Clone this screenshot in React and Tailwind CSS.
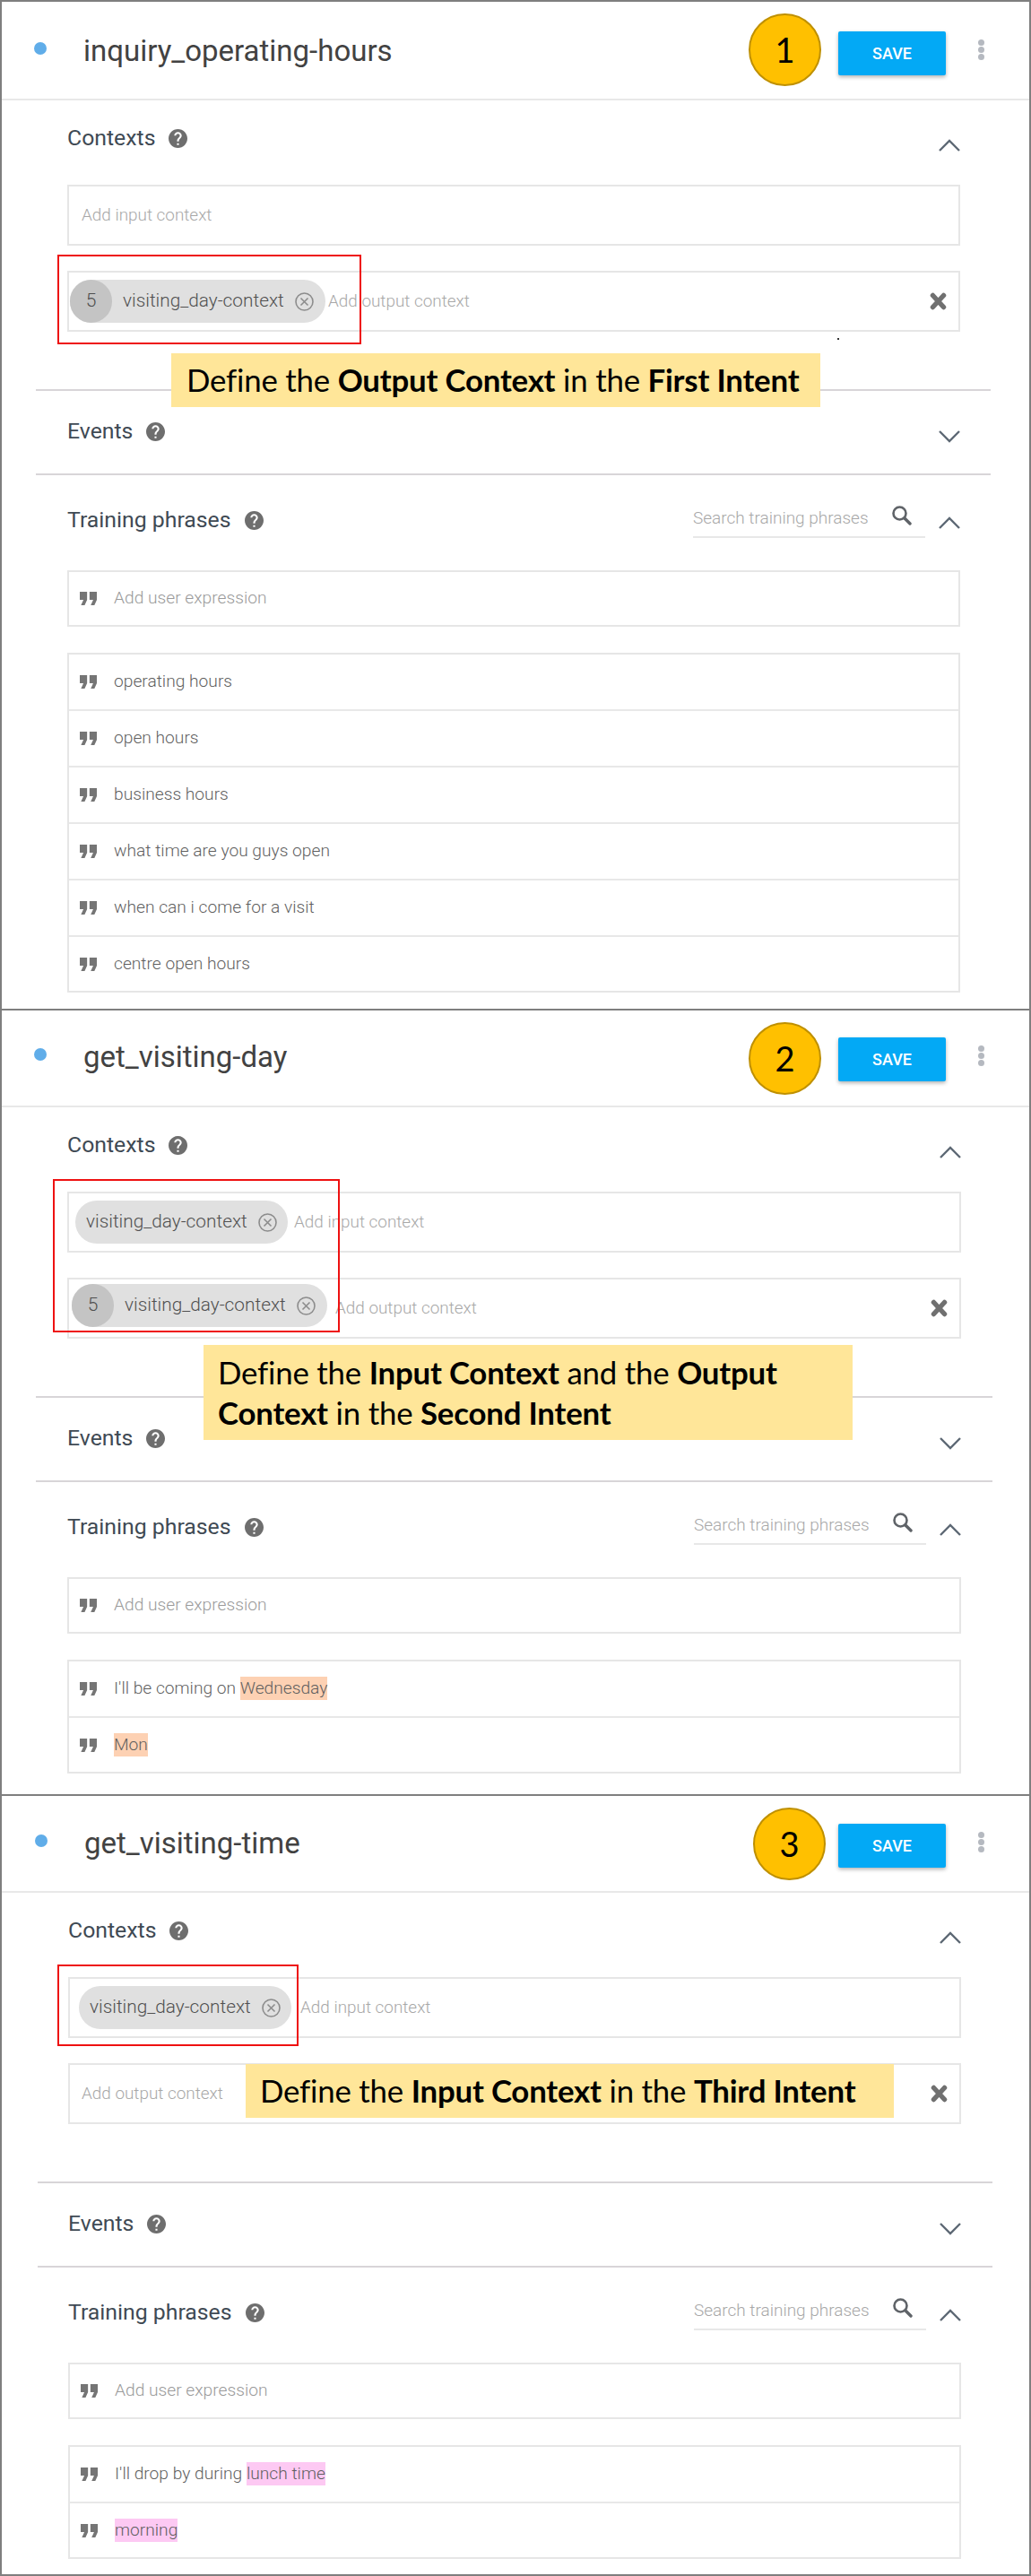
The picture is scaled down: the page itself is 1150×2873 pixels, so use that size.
import React from "react";

const roboto = "font-['Roboto',sans-serif]";
const lato = "font-['Lato',sans-serif]";

function Help() {
  return (
    <svg width="21" height="21" viewBox="2 2 20 20" fill="#6e6e6e" className="shrink-0">
      <path d="M12 2C6.48 2 2 6.48 2 12s4.48 10 10 10 10-4.48 10-10S17.52 2 12 2zm1 17h-2v-2h2v2zm2.07-7.75l-.9.92C13.45 12.9 13 13.5 13 15h-2v-.5c0-1.1.45-2.1 1.17-2.83l1.24-1.26c.37-.36.59-.86.59-1.41 0-1.1-.9-2-2-2s-2 .9-2 2H8c0-2.21 1.79-4 4-4s4 1.79 4 4c0 .88-.36 1.68-.93 2.25z" />
    </svg>
  );
}

function Chevron({ up, className }) {
  return (
    <svg width="24" height="14" viewBox="0 0 24 14" fill="none" stroke="#5d6874" strokeWidth="2.4" className={`shrink-0 ${className}`}>
      <polyline points={up ? "1,13 12,2 23,13" : "1,1 12,12 23,1"} />
    </svg>
  );
}

function Quote() {
  return (
    <svg width="19" height="15" viewBox="5 7 14 10" preserveAspectRatio="none" fill="#757575" className="shrink-0">
      <path d="M6 17h3l2-4V7H5v6h3zm8 0h3l2-4V7h-6v6h3z" />
    </svg>
  );
}

function CloseCircle() {
  return (
    <svg width="21" height="21" viewBox="0 0 21 21" fill="none" stroke="#8c8c8c" strokeWidth="1.6" className="shrink-0">
      <circle cx="10.5" cy="10.5" r="9.5" />
      <path d="M6.5 6.5l8 8M14.5 6.5l-8 8" />
    </svg>
  );
}

function XIcon() {
  return (
    <svg width="19" height="20" viewBox="0 0 19 20" fill="none" stroke="#707070" strokeWidth="5.5" strokeLinecap="round" className="shrink-0">
      <path d="M3.5 3.5l12 13M15.5 3.5l-12 13" />
    </svg>
  );
}

function SearchIcon() {
  return (
    <svg width="23" height="23" viewBox="0 0 23 23" fill="none" stroke="#5f6368" className="shrink-0 -translate-y-[4px]">
      <circle cx="9.5" cy="9.5" r="7" strokeWidth="2.6" />
      <path d="M15 15l6 6" strokeWidth="3.4" strokeLinecap="round" />
    </svg>
  );
}

function Chip({ count, className }) {
  return (
    <div className={`flex items-center h-[48px] rounded-full bg-[#e0e0e0] shrink-0 ${className}`}>
      {count ? (
        <div className="flex items-center justify-center w-[47px] h-[48px] rounded-full bg-[#c4c4c4] text-[21px] font-light text-[#4f4f4f] shrink-0">
          {count}
        </div>
      ) : null}
      <span className="ml-[12px] w-[181px] whitespace-nowrap text-[20.8px] font-light text-[#505050]">visiting_day-context</span>
      <span className="ml-[11px]">
        <CloseCircle />
      </span>
    </div>
  );
}

function Row({ children, last }) {
  return (
    <div className={`flex items-center pl-[12px] ${last ? "h-[60px]" : "h-[63px] border-b-2 border-[#e8e8e8]"}`}>
      <Quote />
      <div className="ml-[19px] text-[19.2px] font-light text-[#5f5f5f] whitespace-pre">{children}</div>
    </div>
  );
}

function Divider({ className }) {
  return <div className={`h-[2px] bg-[#d8d5d8] ${className}`} />;
}

function Panel({ title, className, headerClass, pad, rule, inputBox, outputBox, rows }) {
  return (
    <section className={`border-t-2 border-[#7f7f7f] ${roboto} ${className}`}>
      <header className={`flex items-start border-b-2 border-[#e8e8e8] ${headerClass}`}>
        <div className="ml-[36px] mt-[42px] w-[14px] h-[14px] rounded-full bg-[#60ade9] shrink-0" />
        <h2 className="ml-[41px] mt-[34px] h-[36px] leading-[36px] text-[33px] text-[#424242] font-normal whitespace-nowrap">{title}</h2>
        <div className="ml-auto mt-[30px] flex items-center justify-center w-[120px] h-[49px] rounded-[2px] bg-[#03a9f5] text-white text-[18px] font-medium shadow-[0_2px_4px_rgba(0,0,0,0.3)]">
          SAVE
        </div>
        <div className="ml-[36px] mr-[50px] mt-[39px] flex flex-col gap-[1px] w-[7px]">
          <span className="w-[7px] h-[7px] rounded-full bg-[#b5b9c0]" />
          <span className="w-[7px] h-[7px] rounded-full bg-[#b5b9c0]" />
          <span className="w-[7px] h-[7px] rounded-full bg-[#b5b9c0]" />
        </div>
      </header>

      <div className={`pt-[30px] pb-[64px] ${pad}`}>
        <div className="flex items-center justify-between h-[24px]">
          <div className="flex items-center gap-[15px] text-[24.8px] text-[#3f4a54]">
            Contexts <Help />
          </div>
          <Chevron up className="translate-y-[8px]" />
        </div>
        <div className={`mt-[40px] h-[68px] flex items-center border-2 border-[#e6e6e6] ${inputBox.className}`}>
          {inputBox.chip}
          <span className={`text-[18.9px] font-light text-[#a8a8a8] whitespace-nowrap ${inputBox.textClass}`}>Add input context</span>
        </div>
        <div className={`mt-[28px] h-[68px] flex items-center justify-between border-2 border-[#e6e6e6] pr-[13px] ${outputBox.className}`}>
          <div className="flex items-center">
            {outputBox.chip}
            <span className={`text-[18.9px] font-light text-[#a8a8a8] whitespace-nowrap ${outputBox.textClass}`}>Add output context</span>
          </div>
          <XIcon />
        </div>
      </div>

      <Divider className={rule} />

      <div className={`h-[92px] pt-[33px] ${pad}`}>
        <div className="flex items-center justify-between h-[24px]">
          <div className="flex items-center gap-[15px] text-[24.8px] text-[#3f4a54]">
            Events <Help />
          </div>
          <Chevron className="translate-y-[6px]" />
        </div>
      </div>

      <Divider className={rule} />

      <div className={`pt-[38px] ${pad}`}>
        <div className="flex items-center justify-between h-[24px]">
          <div className="flex items-center gap-[15px] text-[24.8px] text-[#3f4a54]">
            Training phrases <Help />
          </div>
          <div className="flex items-center gap-[15px]">
            <div className="flex items-center justify-between w-[259px] h-[42px] pr-[15px] border-b-2 border-[#e8e8e8] text-[19px] font-light text-[#a8a8a8] whitespace-nowrap -translate-y-[1px]">
              Search training phrases
              <SearchIcon />
            </div>
            <Chevron up className="translate-y-[3px]" />
          </div>
        </div>
        <div className="mt-[44px] h-[63px] flex items-center pl-[12px] border-2 border-[#e6e6e6]">
          <Quote />
          <span className="ml-[19px] text-[19.2px] font-light text-[#9a9a9a] whitespace-nowrap">Add user expression</span>
        </div>
        <div className="mt-[29px] border-2 border-[#e6e6e6]">
          {rows.map((r, i) => (
            <Row key={i} last={i === rows.length - 1}>
              {r}
            </Row>
          ))}
        </div>
      </div>
    </section>
  );
}

function Mark({ children, className }) {
  return <span className={`inline-block h-[26px] leading-[26px] ${className}`}>{children}</span>;
}

function Badge({ n, className }) {
  return (
    <div className={`absolute w-[81px] h-[81px] rounded-full bg-[#ffc000] border-2 border-[#bf9000] flex items-center justify-center text-[38px] text-black ${lato} ${className}`}>
      {n}
    </div>
  );
}

function Callout({ children, className }) {
  return (
    <div className={`absolute bg-[#ffe699] text-black text-[34.8px] leading-[45px] tracking-[-0.2px] whitespace-nowrap ${lato} ${className}`}>
      {children}
    </div>
  );
}

function RedBox({ className }) {
  return <div className={`absolute border-2 border-[#ee1111] ${className}`} />;
}

export default function App() {
  return (
    <div className="relative w-[1150px] h-[2873px] bg-white border-x-2 border-b-2 border-[#7f7f7f] overflow-hidden">
      <Panel
        title="inquiry_operating-hours"
        className="h-[1125px]"
        headerClass="h-[110px] pt-[3px]"
        pad="ml-[73px] mr-[77px]"
        rule="ml-[38px] mr-[43px]"
        inputBox={{ className: "pl-[14px]", textClass: "" }}
        outputBox={{
          className: "pl-[1px]",
          chip: <Chip count="5" className="w-[285px]" />,
          textClass: "ml-[3px]",
        }}
        rows={["operating hours", "open hours", "business hours", "what time are you guys open", "when can i come for a visit", "centre open hours"]}
      />
      <Panel
        title="get_visiting-day"
        className="h-[876px]"
        headerClass="h-[108px]"
        pad="ml-[73px] mr-[76px]"
        rule="ml-[38px] mr-[41px]"
        inputBox={{
          className: "pl-[7px]",
          chip: <Chip className="w-[237px]" />,
          textClass: "ml-[7px]",
        }}
        outputBox={{
          className: "pl-[3px]",
          chip: <Chip count="5" className="w-[285px] -translate-y-[3px]" />,
          textClass: "ml-[9px]",
        }}
        rows={[
          <>I'll be coming on <Mark className="bg-[#fdd1b3]">Wednesday</Mark></>,
          <Mark className="bg-[#fdd1b3]">Mon</Mark>,
        ]}
      />
      <Panel
        title="get_visiting-time"
        className="h-[870px]"
        headerClass="h-[108px] pt-[1px] pl-[1px]"
        pad="ml-[74px] mr-[76px]"
        rule="ml-[40px] mr-[41px]"
        inputBox={{
          className: "pl-[10px]",
          chip: <Chip className="w-[237px]" />,
          textClass: "ml-[10px]",
        }}
        outputBox={{ className: "pl-[13px]", textClass: "" }}
        rows={[
          <>I'll drop by during <Mark className="bg-[#fdc9f3]">lunch time</Mark></>,
          <Mark className="bg-[#fdc9f3]">morning</Mark>,
        ]}
      />

      <Badge n="1" className="left-[833px] top-[15px]" />
      <Badge n="2" className="left-[833px] top-[1140px]" />
      <Badge n="3" className="left-[838px] top-[2016px]" />

      <RedBox className="left-[62px] top-[284px] w-[339px] h-[100px]" />
      <RedBox className="left-[57px] top-[1315px] w-[320px] h-[171px]" />
      <RedBox className="left-[62px] top-[2191px] w-[269px] h-[91px]" />

      <div className="absolute left-[932px] top-[377px] w-[2px] h-[2px] bg-[#333333]" />

      <Callout className="left-[189px] top-[394px] w-[724px] h-[60px] pl-[17px] pt-[7px]">
        Define the <b>Output Context</b> in the <b>First Intent</b>
      </Callout>
      <Callout className="left-[225px] top-[1500px] w-[724px] h-[106px] pl-[16px] pt-[8px]">
        Define the <b>Input Context</b> and the <b>Output</b>
        <br />
        <b>Context</b> in the <b>Second Intent</b>
      </Callout>
      <Callout className="left-[272px] top-[2302px] w-[723px] h-[60px] pl-[16px] pt-[7px]">
        Define the <b>Input Context</b> in the <b>Third Intent</b>
      </Callout>
    </div>
  );
}
